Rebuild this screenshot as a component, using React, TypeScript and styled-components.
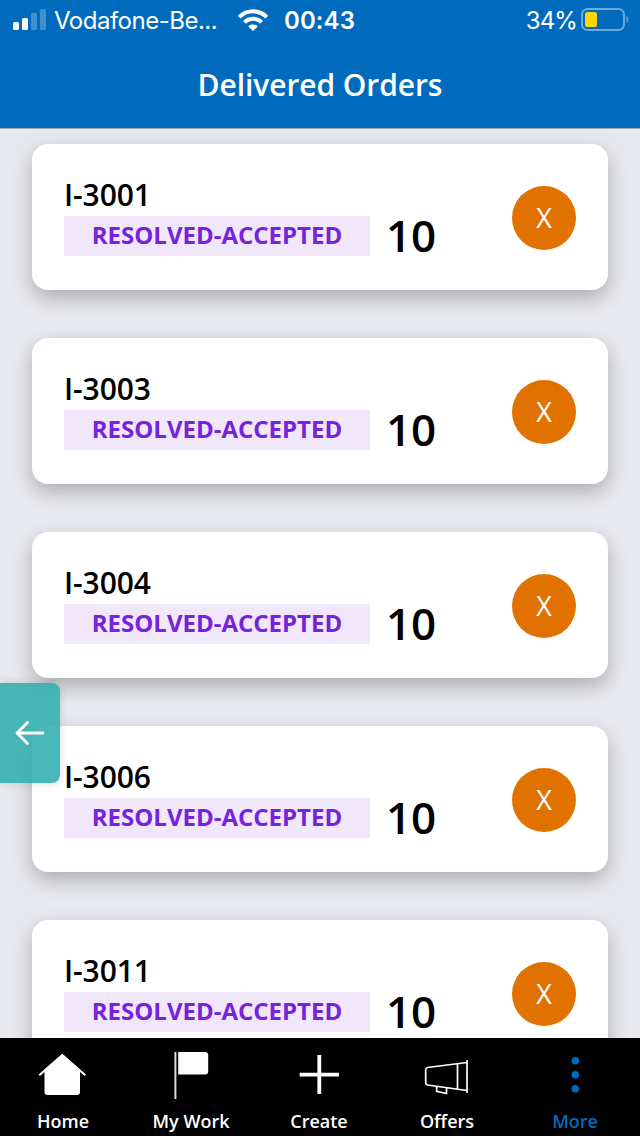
import React from "react";
import styled, { createGlobalStyle } from "styled-components";

const GlobalStyle = createGlobalStyle`
  * { box-sizing: border-box; }
  body { margin: 0; background: #e8e9ee; font-family: "Open Sans", "Noto Sans", sans-serif; }
`;

const Screen = styled.div`
  position: relative;
  width: 640px;
  height: 1136px;
  overflow: hidden;
  display: flex;
  flex-direction: column;
  background: #e8e9ee;
`;

const Header = styled.header`
  flex: none;
  height: 129px;
  background: #006bbd;
  border-bottom: 1px solid #a3a7ad;
  color: #fff;
`;

const StatusBar = styled.div`
  height: 40px;
  display: flex;
  align-items: center;
  padding: 0 11px 0 13px;
  font: 400 24px/40px Inter, sans-serif;
`;

const Carrier = styled.span`
  margin-left: 8px;
  padding-top: 2px;
  width: 184px;
  letter-spacing: -0.5px;
  white-space: nowrap;
`;

const Time = styled.span`
  margin-left: 16px;
  padding-top: 2px;
  font-weight: 600;
  letter-spacing: 0.1px;
`;

const Battery = styled.span`
  margin-left: auto;
  display: flex;
  align-items: center;
  gap: 4px;
`;

const Charge = styled.span`
  padding-top: 2px;
  letter-spacing: -0.9px;
`;

const Title = styled.h1`
  margin: 0;
  height: 88px;
  text-align: center;
  font-size: 30px;
  font-weight: 600;
  line-height: 90px;
  letter-spacing: -0.08px;
`;

const Orders = styled.main`
  flex: 1;
  min-height: 0;
  overflow: hidden;
  display: flex;
  flex-direction: column;
  gap: 48px;
  padding: 15px 32px 0;
`;

const Card = styled.article`
  flex: none;
  height: 146px;
  display: flex;
  padding: 32px;
  border-radius: 16px;
  background: #fff;
  box-shadow: 0 8px 20px rgba(0, 0, 0, 0.26);
`;

const OrderInfo = styled.div`
  width: 306px;
`;

const OrderId = styled.div`
  height: 40px;
  font-size: 30px;
  font-weight: 600;
  line-height: 38px;
  letter-spacing: -0.1px;
  color: #000;
`;

const Status = styled.div`
  height: 40px;
  background: #f1e7fa;
  color: #7523dc;
  text-align: center;
  font-size: 24px;
  font-weight: 700;
  line-height: 38px;
  white-space: nowrap;
`;

const Quantity = styled.div`
  margin: 29px 0 0 16px;
  font-size: 44px;
  font-weight: 600;
  line-height: 60px;
  letter-spacing: -0.2px;
  color: #000;
`;

const Avatar = styled.div`
  margin: 10px 0 0 auto;
  width: 64px;
  height: 64px;
  border-radius: 50%;
  background: #e27200;
  color: #fff;
  text-align: center;
  font-size: 27px;
  font-weight: 400;
  line-height: 64px;
`;

const BackTab = styled.button`
  position: absolute;
  left: 0;
  top: 683px;
  width: 60px;
  height: 100px;
  border: 0;
  border-radius: 0 8px 8px 0;
  background: rgba(46, 173, 173, 0.87);
  box-shadow: 0 0 8px rgba(0, 0, 0, 0.16);
  display: flex;
  align-items: center;
  padding: 0 0 0 14px;
`;

const NavBar = styled.nav`
  flex: none;
  height: 98px;
  display: flex;
  background: #000;
`;

const NavItem = styled.div<{ $active?: boolean }>`
  flex: none;
  width: 128px;
  display: flex;
  flex-direction: column;
  align-items: center;
  padding: 11px 2px 0 0;
  color: ${(p) => (p.$active ? "#006bbd" : "#fff")};
`;

const NavLabel = styled.span`
  margin-top: 6px;
  font-size: 18px;
  font-weight: 600;
  line-height: 29px;
`;

const NavIcon = styled.svg`
  width: 52px;
  height: 52px;
  flex: none;
`;

const SignalIcon = () => (
  <svg width="33" height="22" viewBox="0 0 33 22" fill="#fff">
    <rect x="0" y="13" width="6" height="8" rx="1.5" />
    <rect x="9" y="9" width="6" height="12" rx="1.5" />
    <rect x="18" y="4" width="6" height="17" rx="1.5" opacity=".25" />
    <rect x="27" y="0" width="6" height="21" rx="1.5" opacity=".25" />
  </svg>
);

const WifiIcon = () => (
  <svg width="30" height="22" viewBox="0 0 30 22" fill="none" stroke="#fff" strokeWidth="4">
    <path d="M1.2 8.2C8.8 .4 21.2 .4 28.8 8.2" />
    <path d="M6.4 13.4C11.2 8.6 18.8 8.6 23.6 13.4" />
    <path d="M10.2 17.4C12.9 14.9 17.1 14.9 19.8 17.4L15 22Z" fill="#fff" stroke="none" />
  </svg>
);

const BatteryIcon = () => (
  <svg width="48" height="24" viewBox="0 0 48 24">
    <rect x="1" y="1" width="42" height="21" rx="5.5" fill="none" stroke="#fff" strokeOpacity=".42" strokeWidth="2" />
    <rect x="4" y="4" width="12" height="15" rx="2.5" fill="#ffd60a" />
    <path d="M45.5 8C48 9 48 14 45.5 15Z" fill="#fff" opacity=".42" />
  </svg>
);

const ArrowIcon = () => (
  <svg width="32" height="28" viewBox="0 0 32 28" fill="none" stroke="#fff" strokeWidth="2.8" strokeLinecap="round" strokeLinejoin="round">
    <path d="M29 14H3M13.5 3.5L3 14L13.5 24.5" />
  </svg>
);

const HomeIcon = () => (
  <NavIcon viewBox="0 0 52 52">
    <path d="M2.3 26.3L25.3 6L48.3 26.3" fill="none" stroke="#fff" strokeWidth="2" />
    <path d="M25.3 5L43 20.5V43Q43 46 40 46H10.5Q7.5 46 7.5 43V20.5Z" fill="#fff" />
  </NavIcon>
);

const FlagIcon = () => (
  <NavIcon viewBox="0 0 52 52">
    <path d="M10.4 3V50" fill="none" stroke="#ddd" strokeWidth="2" />
    <path d="M13.2 3H40.2Q43.2 3 43.2 6V22.5Q43.2 25.5 40.2 25.5H13.2Z" fill="#fff" />
  </NavIcon>
);

const PlusIcon = () => (
  <NavIcon viewBox="0 0 52 52">
    <path d="M6.7 25.6H46M26.3 6V45" fill="none" stroke="#fff" strokeWidth="3.8" />
  </NavIcon>
);

const OffersIcon = () => (
  <NavIcon viewBox="0 0 52 52" fill="none" stroke="#fff" strokeWidth="1.7">
    <path d="M46 13.5L6.5 18.5Q4.7 19 4.7 21V33.5Q4.7 35.5 6.5 36L46 41.5M46 11V44M36.5 15V40M15.7 37.5V42.3L25.5 44.5V38.5" />
  </NavIcon>
);

const MoreIcon = () => (
  <NavIcon viewBox="0 0 52 52" fill="currentColor">
    <circle cx="26.3" cy="11.7" r="3.8" />
    <circle cx="26.3" cy="25.7" r="3.8" />
    <circle cx="26.3" cy="39.7" r="3.8" />
  </NavIcon>
);

const orderIds = ["I-3001", "I-3003", "I-3004", "I-3006", "I-3011"];

const navItems = [
  { label: "Home", Icon: HomeIcon },
  { label: "My Work", Icon: FlagIcon },
  { label: "Create", Icon: PlusIcon },
  { label: "Offers", Icon: OffersIcon },
  { label: "More", Icon: MoreIcon, active: true },
];

export default function App() {
  return (
    <Screen>
      <GlobalStyle />
      <Header>
        <StatusBar>
          <SignalIcon />
          <Carrier>Vodafone-Be...</Carrier>
          <WifiIcon />
          <Time>00:43</Time>
          <Battery>
            <Charge>34%</Charge>
            <BatteryIcon />
          </Battery>
        </StatusBar>
        <Title>Delivered Orders</Title>
      </Header>
      <Orders>
        {orderIds.map((id) => (
          <Card key={id}>
            <OrderInfo>
              <OrderId>{id}</OrderId>
              <Status>RESOLVED-ACCEPTED</Status>
            </OrderInfo>
            <Quantity>10</Quantity>
            <Avatar>X</Avatar>
          </Card>
        ))}
      </Orders>
      <NavBar>
        {navItems.map(({ label, Icon, active }) => (
          <NavItem key={label} $active={active}>
            <Icon />
            <NavLabel>{label}</NavLabel>
          </NavItem>
        ))}
      </NavBar>
      <BackTab aria-label="Back">
        <ArrowIcon />
      </BackTab>
    </Screen>
  );
}
